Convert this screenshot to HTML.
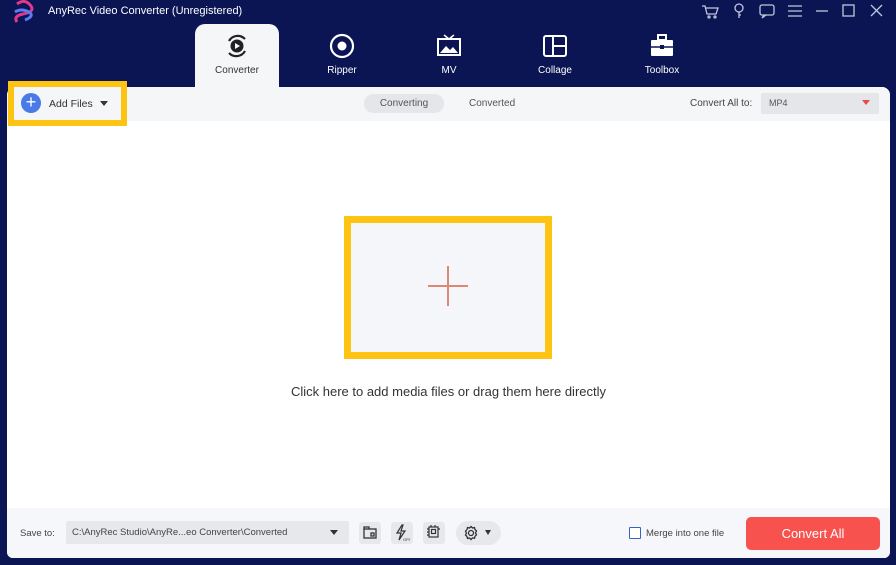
<!DOCTYPE html>
<html><head><meta charset="utf-8"><style>
*{margin:0;padding:0;box-sizing:border-box}
body{width:896px;height:565px;background:#0b1553;font-family:"Liberation Sans",sans-serif;position:relative;overflow:hidden}
.abs{position:absolute}
.title{left:48px;top:5px;color:#fff;font-size:11px}
.tab{position:absolute;top:24px;width:84px;height:64px;text-align:center;color:#fff;font-size:10px}
.tab svg{display:block;margin:9px auto 6px}
.tab.act{background:#f5f6f8;color:#333;border-radius:10px 10px 0 0}
.main{left:7px;top:87px;width:883px;height:471px;background:#fff;border-radius:8px 8px 6px 6px;overflow:hidden}
.tool{left:0;top:0;width:883px;height:34px;background:#f5f6f8}
.bottom{left:0;top:421px;width:883px;height:50px;background:#f5f7fa}
</style></head><body>
<svg class="abs" style="left:11px;top:0" width="28" height="24" viewBox="0 0 28 24"><path d="M6 4 Q14 -2 20 6 Q24 12 12 14 Q2 16 6 22" stroke="#e0388c" stroke-width="3" fill="none"/><path d="M4 12 Q10 8 18 12 Q24 16 14 20" stroke="#5a7cf5" stroke-width="3" fill="none"/></svg>
<div class="abs title">AnyRec Video Converter (Unregistered)</div>
<svg class="abs" style="left:700px;top:2px" width="186" height="18" viewBox="0 0 186 18" fill="none" stroke="#c0c6dc" stroke-width="1.3">
<path d="M2 4h3l2 8h9l2-6H6"/><circle cx="9" cy="15" r="1"/><circle cx="15" cy="15" r="1"/>
<circle cx="39" cy="6" r="4"/><path d="M39 10v6M39 13h2"/>
<rect x="60" y="3" width="14" height="10" rx="2"/><path d="M64 13l-2 3 4-3"/>
<path d="M88 4h14M88 9h14M88 14h14"/>
<path d="M116 9h12"/>
<rect x="143" y="3" width="11" height="11"/>
<path d="M171 3l11 11M182 3l-11 11"/>
</svg>
<div class="tab act" style="left:195px"><svg width="26" height="26" viewBox="0 0 26 26"><path d="M5 8A10 10 0 0 1 21 6M21 18A10 10 0 0 1 5 20" stroke="#222" stroke-width="2.2" fill="none"/><circle cx="13" cy="13" r="6.5" fill="#222"/><path d="M11 10l5 3-5 3z" fill="#fff"/></svg>Converter</div>
<div class="tab" style="left:300px"><svg width="26" height="26" viewBox="0 0 26 26"><circle cx="13" cy="13" r="11" stroke="#fff" stroke-width="2.2" fill="none"/><circle cx="13" cy="13" r="4.5" fill="#fff"/></svg>Ripper</div>
<div class="tab" style="left:407px"><svg width="26" height="26" viewBox="0 0 26 26"><rect x="2" y="6" width="22" height="16" stroke="#fff" stroke-width="2" fill="none"/><path d="M8 2l5 4 5-4" stroke="#fff" stroke-width="1.5" fill="none"/><path d="M4 20l6-7 4 4 3-3 5 6z" fill="#fff"/></svg>MV</div>
<div class="tab" style="left:513px"><svg width="26" height="26" viewBox="0 0 26 26"><rect x="2" y="3" width="22" height="20" rx="2" stroke="#fff" stroke-width="2" fill="none"/><path d="M11 3v20M11 13h13" stroke="#fff" stroke-width="2"/></svg>Collage</div>
<div class="tab" style="left:620px"><svg width="26" height="26" viewBox="0 0 26 26"><rect x="2" y="7" width="22" height="16" rx="1" fill="#fff"/><rect x="9" y="2" width="8" height="5" stroke="#fff" stroke-width="2" fill="none"/><path d="M2 14h22" stroke="#0b1553" stroke-width="1.6"/><rect x="11" y="12" width="4" height="4" fill="#0b1553"/></svg>Toolbox</div>
<div class="abs main">
 <div class="abs tool">
  <div class="abs" style="left:357px;top:7px;width:80px;height:19px;background:#e4e6ea;border-radius:10px;font-size:10px;color:#555;text-align:center;line-height:19px">Converting</div>
  <div class="abs" style="left:462px;top:11px;font-size:10px;color:#555">Converted</div>
  <div class="abs" style="left:683px;top:11px;font-size:10px;color:#444">Convert All to:</div>
  <div class="abs" style="left:754px;top:6px;width:118px;height:21px;background:#e4e6ea;border-radius:2px;font-size:9px;color:#555;padding:5px 8px">MP4</div>
  <div class="abs" style="left:855px;top:13px;border:4px solid transparent;border-top:5px solid #e84a4a"></div>
 </div>
 <div class="abs" style="left:337px;top:129px;width:208px;height:143px;border:7px solid #fdc414;background:#f4f6fa"></div>
 <div class="abs" style="left:421px;top:198px;width:40px;height:2px;background:#e08878"></div>
 <div class="abs" style="left:440px;top:179px;width:2px;height:40px;background:#e08878"></div>
 <div class="abs" style="left:0;top:297px;width:883px;text-align:center;font-size:13px;color:#333">Click here to add media files or drag them here directly</div>
 <div class="abs bottom">
  <div class="abs" style="left:13px;top:20px;font-size:9.5px;color:#444">Save to:</div>
  <div class="abs" style="left:59px;top:13px;width:283px;height:23px;background:#e6e8ec;border-radius:2px;font-size:9.5px;color:#444;padding:6px 6px">C:\AnyRec Studio\AnyRe...eo Converter\Converted</div>
  <div class="abs" style="left:323px;top:22px;border:4px solid transparent;border-top:5px solid #333"></div>
  <div class="abs" style="left:352px;top:14px;width:22px;height:22px;background:#e6e8ec;border-radius:3px"></div>
  <svg class="abs" style="left:356px;top:18px" width="14" height="14" viewBox="0 0 14 14" fill="none" stroke="#333" stroke-width="1.3"><rect x="1" y="3" width="12" height="9"/><path d="M1 3V1h5v2M8 7h3v3H8z"/></svg>
  <div class="abs" style="left:384px;top:14px;width:22px;height:22px;background:#e6e8ec;border-radius:3px"></div>
  <svg class="abs" style="left:387px;top:16px" width="16" height="18" viewBox="0 0 16 18" fill="none" stroke="#333" stroke-width="1.2"><path d="M8 1L3 9h4l-2 7 6-9H7l2-6z"/><text x="9" y="17" font-size="4" fill="#333" stroke="none" font-family="Liberation Sans">OFF</text></svg>
  <div class="abs" style="left:416px;top:14px;width:22px;height:22px;background:#e6e8ec;border-radius:3px"></div>
  <svg class="abs" style="left:419px;top:16px" width="16" height="16" viewBox="0 0 16 16" fill="none" stroke="#333" stroke-width="1.2"><rect x="3" y="3" width="9" height="10"/><rect x="5.5" y="5.5" width="4" height="4"/><path d="M1 5h2M1 8h2M1 11h2M12 5h2M5 1v2M9 1v2"/></svg>
  <div class="abs" style="left:449px;top:13px;width:45px;height:24px;background:#e6e8ec;border-radius:12px"></div>
  <svg class="abs" style="left:456px;top:17px" width="16" height="16" viewBox="0 0 16 16" fill="none" stroke="#333" stroke-width="1.3"><circle cx="8" cy="8" r="2.5"/><path d="M8 1.5l1.5 1.5 2-.5.5 2 1.5 1.5-1 1.9 1 1.9-1.5 1.5-.5 2-2-.5L8 14.5 6.5 13l-2 .5-.5-2L2.5 10l1-1.9-1-1.9L4 4.5l.5-2 2 .5z"/></svg>
  <div class="abs" style="left:478px;top:22px;border:3.5px solid transparent;border-top:5px solid #333"></div>
  <div class="abs" style="left:622px;top:19px;width:12px;height:12px;border:1.3px solid #3a5fd0;background:#fff;border-radius:1px"></div>
  <div class="abs" style="left:639px;top:20px;font-size:9.5px;color:#444">Merge into one file</div>
  <div class="abs" style="left:739px;top:9px;width:134px;height:33px;background:#f8524f;border-radius:5px;color:#fff;font-size:13px;text-align:center;line-height:33px">Convert All</div>
 </div>
</div>
<div class="abs" style="left:8px;top:81px;width:119px;height:45px;border:6px solid #fdc414;background:#f5f6f8"></div>
<div class="abs" style="left:21px;top:93px;width:20px;height:20px;border-radius:50%;background:#4a7ae8;color:#fff;font-size:18px;line-height:19px;text-align:center">+</div>
<div class="abs" style="left:49px;top:98px;font-size:10.5px;color:#333">Add Files</div>
<div class="abs" style="left:100px;top:101px;border:4px solid transparent;border-top:5px solid #333"></div>
</body></html>
